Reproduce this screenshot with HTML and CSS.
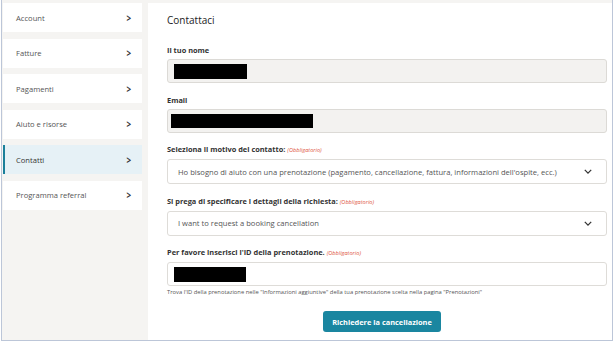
FILE: index.html
```html
<!DOCTYPE html>
<html lang="it">
<head>
  <meta charset="UTF-8"/>
  <title>Contattaci</title>
  <link rel="stylesheet" href="styles.css">
</head>
<body>
<div class="frame">
  <nav class="sidebar">
    <div class="nav-item">Account <span class="chev">&gt;</span></div>
    <div class="nav-item">Fatture <span class="chev">&gt;</span></div>
    <div class="nav-item">Pagamenti <span class="chev">&gt;</span></div>
    <div class="nav-item">Aiuto e risorse <span class="chev">&gt;</span></div>
    <div class="nav-item active">Contatti <span class="chev">&gt;</span></div>
    <div class="nav-item">Programma referral <span class="chev">&gt;</span></div>
  </nav>

  <main class="panel">
    <h1>Contattaci</h1>

    <label class="lbl first">Il tuo nome</label>
    <div class="field grey"><span class="redact r-name"></span></div>

    <label class="lbl">Email</label>
    <div class="field grey"><span class="redact r-mail"></span></div>

    <label class="lbl">Seleziona il motivo del contatto: <em class="req">(Obbligatorio)</em></label>
    <div class="field select">
      <span>Ho bisogno di aiuto con una prenotazione (pagamento, cancellazione, fattura, informazioni dell'ospite, ecc.)</span>
      <svg class="down" viewBox="0 0 10 6" width="8" height="5"><path d="M1 1l4 4 4-4" fill="none" stroke="#333" stroke-width="1.6"/></svg>
    </div>

    <label class="lbl">Si prega di specificare i dettagli della richiesta: <em class="req">(Obbligatorio)</em></label>
    <div class="field select">
      <span>I want to request a booking cancellation</span>
      <svg class="down" viewBox="0 0 10 6" width="8" height="5"><path d="M1 1l4 4 4-4" fill="none" stroke="#333" stroke-width="1.6"/></svg>
    </div>

    <label class="lbl">Per favore inserisci l'ID della prenotazione. <em class="req">(Obbligatorio)</em></label>
    <div class="field white"><span class="redact r-id"></span></div>
    <p class="help">Trova l'ID della prenotazione nelle "Informazioni aggiuntive" della tua prenotazione scelta nella pagina "Prenotazioni"</p>

    <div class="actions">
      <button class="btn">Richiedere la cancellazione</button>
    </div>
  </main>
</div>
</body>
</html>
```

FILE: styles.css
```css
body {
  margin: 0;
  font-family: "Open Sans", "Liberation Sans", sans-serif;
  background: #fff;
  color: #333;
}

.frame {
  width: 610px;
  height: 337px;
  margin-left: 1px;
  padding-top: 3px;
  background: #f5f4f2;
  border-left: 1px solid #bcc6d8;
  border-right: 1px solid #bcc6d8;
  border-bottom: 1px solid #bcc6d8;
  display: flex;
  gap: 6px;
}

.sidebar {
  width: 139px;
  margin-left: 1px;
  display: flex;
  flex-direction: column;
  gap: 6.6px;
}

.nav-item {
  height: 29px;
  background: #fff;
  display: flex;
  align-items: center;
  justify-content: space-between;
  padding: 0 10px 0 13px;
  font-size: 7.6px;
  color: #555;
}

.nav-item.active {
  background: #e6f1f6;
  border-left: 2px solid #1a7f9a;
  padding-left: 11px;
  color: #333;
}

.chev {
  font-size: 10px;
  font-weight: 700;
  color: #333;
  transform: scaleX(0.8);
}

.panel {
  flex: 1;
  background: #fff;
  padding: 10px 5px 0 19px;
  display: flex;
  flex-direction: column;
}

h1 {
  margin: 0;
  font-size: 10px;
  line-height: 14px;
  font-weight: 400;
  color: #222;
}

.lbl {
  font-size: 7.4px;
  line-height: 10px;
  font-weight: 700;
  color: #333;
  margin-top: 11.5px;
  margin-bottom: 4px;
}

.lbl.first {
  margin-top: 18px;
}

.req {
  font-size: 5.6px;
  font-weight: 400;
  color: #e0563f;
}

.field {
  height: 24px;
  box-sizing: border-box;
  border-radius: 3px;
  display: flex;
  align-items: center;
  padding: 0 6px;
}

.field.grey {
  background: #f3f2f0;
  border: 1px solid #dcdad6;
}

.field.white {
  background: #fff;
  border: 1px solid #dedcd8;
}

.field.select {
  height: 25px;
  background: #fff;
  border: 1px solid #dedcd8;
  justify-content: space-between;
  padding: 0 14px 0 10px;
  font-size: 7.6px;
  color: #555;
}

.redact {
  display: block;
  height: 15px;
  background: #000;
}

.r-name { width: 73px; }
.r-mail { width: 142px; margin-left: -3px; height: 14px; }
.r-id { width: 72px; }

.help {
  margin: 2px 0 0;
  font-size: 5.8px;
  color: #555;
}

.actions {
  display: flex;
  justify-content: center;
  margin-top: 15px;
  padding-right: 10px;
}

.btn {
  width: 118px;
  height: 21px;
  border: none;
  border-radius: 3px;
  background: #1a86a0;
  color: #fff;
  font-family: inherit;
  font-size: 7.4px;
  font-weight: 700;
}
```
